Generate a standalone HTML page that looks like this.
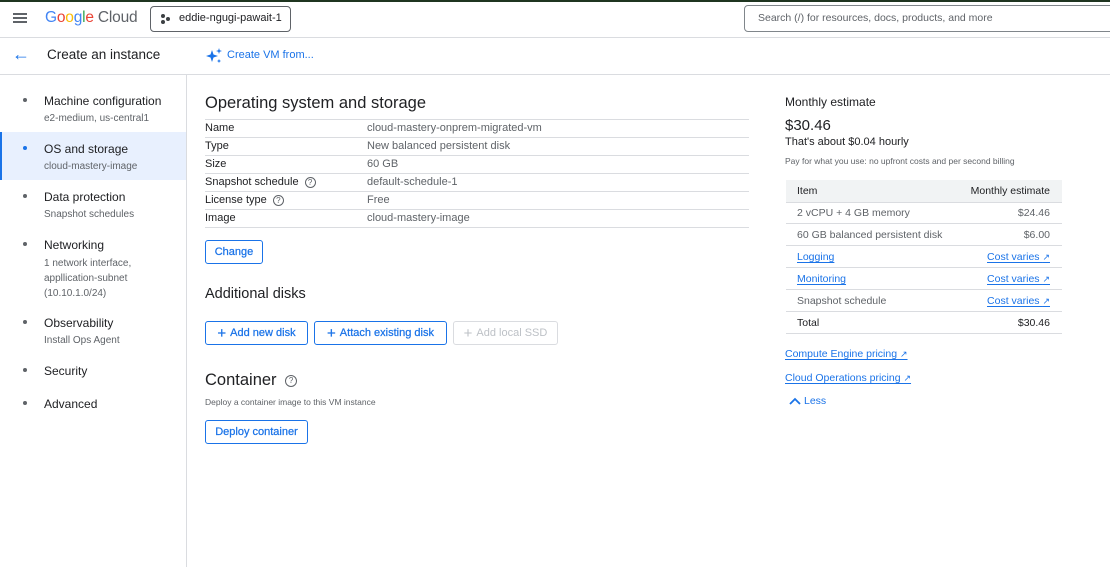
<!DOCTYPE html>
<html><head><meta charset="utf-8"><style>
*{margin:0;padding:0;box-sizing:border-box}
body{width:1110px;height:567px;overflow:hidden;background:#fff;font-family:"Liberation Sans",Arial,sans-serif;color:#202124;position:relative}
.a{position:absolute;white-space:nowrap}
.hl{position:absolute;height:1px;background:#dadce0}
.btn{position:absolute;border:1px solid #1a73e8;border-radius:3px;color:#1a73e8;font-size:11px;display:flex;align-items:center;justify-content:center;height:24px;-webkit-text-stroke:0.25px #1a73e8}
.t{font-size:11px}
.s{font-size:10px;color:#5f6368}
.lnk{color:#1a73e8;text-decoration:underline;text-underline-offset:2px}
.dot{position:absolute;left:23px;width:4px;height:4px;border-radius:2px;background:#5f6368}
.ext{font-size:9px}
</style></head><body>
<div class="a" style="left:0;top:0;width:1110px;height:2px;background:#1f3520"></div>
<div class="a" style="left:13px;top:13px;width:14px;height:2px;background:#5f6368;box-shadow:0 4px 0 #5f6368,0 8px 0 #5f6368"></div>
<div class="a" style="left:45px;top:9px;font-size:15.5px;letter-spacing:-0.2px"><span style="color:#4285f4">G</span><span style="color:#ea4335">o</span><span style="color:#fbbc04">o</span><span style="color:#4285f4">g</span><span style="color:#34a853">l</span><span style="color:#ea4335">e</span> <span style="color:#5f6368">Cloud</span></div>
<div class="a" style="left:150px;top:6px;width:141px;height:26px;border:1px solid #5f6368;border-radius:4px"></div>
<div class="a" style="left:161px;top:14px;width:4px;height:4px;border-radius:2px;background:#3c4043;box-shadow:5px 3px 0 #3c4043,0 6px 0 #3c4043"></div>
<div class="a" style="left:179px;top:12px;font-size:11px">eddie-ngugi-pawait-1</div>
<div class="a" style="left:744px;top:5px;width:380px;height:27px;border:1px solid #80868b;border-radius:4px;background:#fff"></div>
<div class="a" style="left:758px;top:12px;font-size:10.5px;color:#5f6368">Search (/) for resources, docs, products, and more</div>
<div class="hl" style="left:0;top:37px;width:1110px"></div>
<div class="a" style="left:12px;top:44px;font-size:18px;color:#1a73e8">&#8592;</div>
<div class="a" style="left:47px;top:47px;font-size:13.5px">Create an instance</div>
<svg class="a" style="left:205px;top:47px" width="18" height="18" viewBox="0 0 18 18"><path d="M7 3 L8.5 7.5 L13 9 L8.5 10.5 L7 15 L5.5 10.5 L1 9 L5.5 7.5Z" fill="#1a73e8"/><path d="M14 1 L14.7 3.3 L17 4 L14.7 4.7 L14 7 L13.3 4.7 L11 4 L13.3 3.3Z" fill="#1a73e8"/><path d="M14 12 L14.6 13.4 L16 14 L14.6 14.6 L14 16 L13.4 14.6 L12 14 L13.4 13.4Z" fill="#1a73e8"/></svg>
<div class="a" style="left:227px;top:49px;font-size:11px;color:#1a73e8">Create VM from...</div>
<div class="hl" style="left:0;top:74px;width:1110px"></div>
<div class="a" style="left:186px;top:75px;width:1px;height:492px;background:#dadce0"></div>
<div class="a" style="left:0;top:132px;width:186px;height:48px;background:#e8f0fe"></div>
<div class="a" style="left:0;top:132px;width:2px;height:48px;background:#1a73e8"></div>
<div class="dot" style="top:98px"></div><div class="a t" style="left:44px;top:94px;font-size:12px">Machine configuration</div><div class="a s" style="left:44px;top:113px">e2-medium, us-central1</div>
<div class="dot" style="top:146px;background:#1a73e8"></div><div class="a t" style="left:44px;top:142px;font-size:12px">OS and storage</div><div class="a s" style="left:44px;top:161px">cloud-mastery-image</div>
<div class="dot" style="top:194px"></div><div class="a t" style="left:44px;top:190px;font-size:12px">Data protection</div><div class="a s" style="left:44px;top:209px">Snapshot schedules</div>
<div class="dot" style="top:242px"></div><div class="a t" style="left:44px;top:238px;font-size:12px">Networking</div><div class="a s" style="left:44px;top:256px;line-height:15px">1 network interface,<br>appllication-subnet<br>(10.10.1.0/24)</div>
<div class="dot" style="top:320px"></div><div class="a t" style="left:44px;top:316px;font-size:12px">Observability</div><div class="a s" style="left:44px;top:335px">Install Ops Agent</div>
<div class="dot" style="top:368px"></div><div class="a t" style="left:44px;top:364px;font-size:12px">Security</div>
<div class="dot" style="top:401px"></div><div class="a t" style="left:44px;top:397px;font-size:12px">Advanced</div>
<div class="a" style="left:205px;top:94px;font-size:16.5px">Operating system and storage</div>
<div class="hl" style="left:205px;top:119px;width:544px"></div>
<div class="a t" style="left:205px;top:122px">Name</div><div class="a t" style="left:367px;top:122px;color:#5f6368">cloud-mastery-onprem-migrated-vm</div>
<div class="hl" style="left:205px;top:137px;width:544px"></div>
<div class="a t" style="left:205px;top:140px">Type</div><div class="a t" style="left:367px;top:140px;color:#5f6368">New balanced persistent disk</div>
<div class="hl" style="left:205px;top:155px;width:544px"></div>
<div class="a t" style="left:205px;top:158px">Size</div><div class="a t" style="left:367px;top:158px;color:#5f6368">60 GB</div>
<div class="hl" style="left:205px;top:173px;width:544px"></div>
<div class="a t" style="left:205px;top:176px">Snapshot schedule <span style="display:inline-block;width:11px;height:11px;border:1px solid #5f6368;border-radius:50%;font-size:8px;text-align:center;line-height:9px;color:#5f6368;margin-left:3px">?</span></div><div class="a t" style="left:367px;top:176px;color:#5f6368">default-schedule-1</div>
<div class="hl" style="left:205px;top:191px;width:544px"></div>
<div class="a t" style="left:205px;top:194px">License type <span style="display:inline-block;width:11px;height:11px;border:1px solid #5f6368;border-radius:50%;font-size:8px;text-align:center;line-height:9px;color:#5f6368;margin-left:3px">?</span></div><div class="a t" style="left:367px;top:194px;color:#5f6368">Free</div>
<div class="hl" style="left:205px;top:209px;width:544px"></div>
<div class="a t" style="left:205px;top:212px">Image</div><div class="a t" style="left:367px;top:212px;color:#5f6368">cloud-mastery-image</div>
<div class="hl" style="left:205px;top:227px;width:544px"></div>
<div class="btn" style="left:205px;top:240px;width:58px">Change</div>
<div class="a" style="left:205px;top:286px;font-size:14.5px">Additional disks</div>
<div class="btn" style="left:205px;top:321px;width:103px"><span style="font-size:15px;margin-right:4px">+</span>Add new disk</div>
<div class="btn" style="left:314px;top:321px;width:133px"><span style="font-size:15px;margin-right:4px">+</span>Attach existing disk</div>
<div class="btn" style="left:453px;top:321px;width:105px;border-color:#dadce0;color:#bdc1c6;-webkit-text-stroke:0"><span style="font-size:15px;margin-right:4px">+</span>Add local SSD</div>
<div class="a" style="left:205px;top:371px;font-size:16.5px">Container <span style="display:inline-block;width:12px;height:12px;border:1px solid #5f6368;border-radius:50%;font-size:8px;text-align:center;line-height:10px;color:#5f6368;margin-left:4px;vertical-align:2px">?</span></div>
<div class="a" style="left:205px;top:397px;font-size:8.5px;color:#5f6368">Deploy a container image to this VM instance</div>
<div class="btn" style="left:205px;top:420px;width:103px">Deploy container</div>
<div class="a" style="left:785px;top:95px;font-size:12px">Monthly estimate</div>
<div class="a" style="left:785px;top:117px;font-size:15px">$30.46</div>
<div class="a" style="left:785px;top:136px;font-size:11px">That's about $0.04 hourly</div>
<div class="a" style="left:785px;top:156px;font-size:8.5px;color:#5f6368">Pay for what you use: no upfront costs and per second billing</div>
<div class="a" style="left:786px;top:180px;width:276px;height:22px;background:#f1f3f4"></div>
<div class="a" style="left:797px;top:185px;font-size:10.5px">Item</div><div class="a" style="right:60px;top:185px;font-size:10.5px">Monthly estimate</div>
<div class="hl" style="left:786px;top:202px;width:276px"></div>
<div class="a s" style="left:797px;top:207px;font-size:10.5px">2 vCPU + 4 GB memory</div><div class="a s" style="right:60px;top:207px;font-size:10.5px">$24.46</div>
<div class="hl" style="left:786px;top:223px;width:276px"></div>
<div class="a s" style="left:797px;top:229px;font-size:10.5px">60 GB balanced persistent disk</div><div class="a s" style="right:60px;top:229px;font-size:10.5px">$6.00</div>
<div class="hl" style="left:786px;top:245px;width:276px"></div>
<div class="a lnk" style="left:797px;top:251px;font-size:10.5px">Logging</div><div class="a lnk" style="right:60px;top:251px;font-size:10.5px">Cost varies <span class="ext">↗</span></div>
<div class="hl" style="left:786px;top:267px;width:276px"></div>
<div class="a lnk" style="left:797px;top:273px;font-size:10.5px">Monitoring</div><div class="a lnk" style="right:60px;top:273px;font-size:10.5px">Cost varies <span class="ext">↗</span></div>
<div class="hl" style="left:786px;top:289px;width:276px"></div>
<div class="a s" style="left:797px;top:295px;font-size:10.5px">Snapshot schedule</div><div class="a lnk" style="right:60px;top:295px;font-size:10.5px">Cost varies <span class="ext">↗</span></div>
<div class="hl" style="left:786px;top:311px;width:276px"></div>
<div class="a" style="left:797px;top:317px;font-size:10.5px">Total</div><div class="a" style="right:60px;top:317px;font-size:10.5px">$30.46</div>
<div class="hl" style="left:786px;top:333px;width:276px"></div>
<div class="a lnk" style="left:785px;top:348px;font-size:10.5px">Compute Engine pricing <span class="ext">↗</span></div>
<div class="a lnk" style="left:785px;top:372px;font-size:10.5px">Cloud Operations pricing <span class="ext">↗</span></div>
<svg class="a" style="left:789px;top:397px" width="12" height="8" viewBox="0 0 12 8"><path d="M1 7 L6 2 L11 7" stroke="#1a73e8" stroke-width="1.8" fill="none"/></svg>
<div class="a" style="left:804px;top:395px;font-size:10.5px;color:#1a73e8">Less</div>
</body></html>
